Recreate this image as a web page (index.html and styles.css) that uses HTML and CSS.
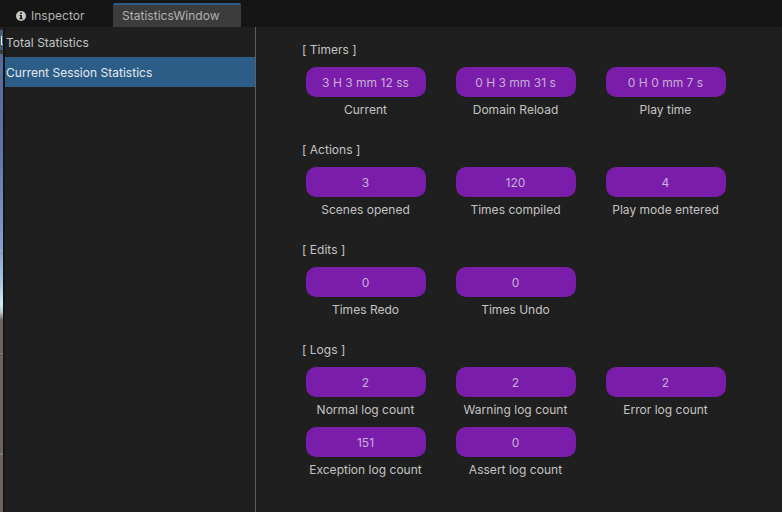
FILE: index.html
```html
<!DOCTYPE html>
<html lang="en">
<head>
<meta charset="utf-8">
<title>StatisticsWindow</title>
<link rel="stylesheet" href="styles.css">
</head>
<body>
<header class="tabs">
  <div class="tab">
    <svg class="info" viewBox="0 0 10 10"><circle cx="5" cy="5" r="5" fill="#c8c8c8"/><path d="M4.1 1.5h1.8v1.6H4.1zM3.5 4h2.4v3.2h.8v1.1H3.4V7.2h.8V5.1h-.7z" fill="#151515"/></svg>
    <span>Inspector</span>
  </div>
  <div class="tab active"><span>StatisticsWindow</span></div>
</header>
<div class="body">
  <div class="scene"><div class="scene-bar"><i></i></div><div class="sky"></div><div class="ground"></div></div>
  <nav class="sidebar">
    <div class="item">Total Statistics</div>
    <div class="item selected">Current Session Statistics</div>
  </nav>
  <main class="content">
    <section>
      <h2>[ Timers ]</h2>
      <div class="grid">
        <div class="stat"><b>3 H 3 mm 12 ss</b><span>Current</span></div>
        <div class="stat"><b>0 H 3 mm 31 s</b><span>Domain Reload</span></div>
        <div class="stat"><b>0 H 0 mm 7 s</b><span>Play time</span></div>
      </div>
    </section>
    <section>
      <h2>[ Actions ]</h2>
      <div class="grid">
        <div class="stat"><b>3</b><span>Scenes opened</span></div>
        <div class="stat"><b>120</b><span>Times compiled</span></div>
        <div class="stat"><b>4</b><span>Play mode entered</span></div>
      </div>
    </section>
    <section>
      <h2>[ Edits ]</h2>
      <div class="grid">
        <div class="stat"><b>0</b><span>Times Redo</span></div>
        <div class="stat"><b>0</b><span>Times Undo</span></div>
      </div>
    </section>
    <section>
      <h2>[ Logs ]</h2>
      <div class="grid">
        <div class="stat"><b>2</b><span>Normal log count</span></div>
        <div class="stat"><b>2</b><span>Warning log count</span></div>
        <div class="stat"><b>2</b><span>Error log count</span></div>
        <div class="stat"><b>151</b><span>Exception log count</span></div>
        <div class="stat"><b>0</b><span>Assert log count</span></div>
      </div>
    </section>
  </main>
</div>
</body>
</html>
```
FILE: styles.css
```css
* { box-sizing: border-box; }
body {
  margin: 0;
  width: 782px;
  height: 512px;
  overflow: hidden;
  display: flex;
  flex-direction: column;
  background: #151515;
  color: #c4c4c4;
  font: 12px/16px Inter, "Liberation Sans", sans-serif;
  letter-spacing: 0.02px;
}
.tabs { display: flex; height: 27px; padding: 3px 0 0 5px; }
.tab { display: flex; align-items: center; width: 108px; height: 24px; padding: 2px 0 0 11px; gap: 5px; color: #b2b2b2; }
.tab.active { width: 128px; padding: 0 0 0 9px; background: #3c3c3c; border-top: 2px solid #2c5d87; border-radius: 2px 2px 0 0; }
.info { width: 10px; height: 10px; }
.body { display: flex; flex: 1; min-height: 0; }
.scene { display: flex; flex-direction: column; width: 3px; margin-right: 2px; }
.scene-bar { height: 27px; padding: 6px 0 0 1px; border-top: 3px solid #282828; border-bottom: 4px solid #3c3c3c; background: #46607c; }
.scene-bar i { display: block; width: 2px; height: 9px; border-left: 1px solid #eee; border-bottom: 1px solid #ccc; }
.sky { height: 266px; background: linear-gradient(transparent 199px, #8298b5 199px 200px, transparent 200px), linear-gradient(#566b99, #5c73a3 35%, #809fcb 72%, #a6c9e1 86%, #cdf0f3 94%, #b9cccb 97%, #6c6966); }
.ground { flex: 1; background: linear-gradient(transparent 33px, #827d77 33px 34px, transparent 34px 133px, #827d77 133px 135px, transparent 135px), #6a625b; }
.sidebar { width: 251px; background: #1f1f1f; border-right: 1px solid #606060; }
.item { height: 30px; padding: 8px 1px 0; }
.item.selected { background: #2c5d87; color: #e6ebef; }
.content { display: flex; flex-direction: column; gap: 24px; flex: 1; padding: 15px 0 0 46px; background: #1f1f1f; }
h2 { margin: 0 0 9px; height: 16px; font: inherit; }
section { display: flow-root; height: 76px; }
.grid { display: grid; grid-template-columns: repeat(3, 120px); gap: 10px 30px; margin-left: 4px; }
.stat { height: 50px; text-align: center; }
.stat b { display: block; height: 30px; padding: 1px 1px 0 0; line-height: 30px; border-radius: 10px; background: #7a1dab; color: #c9b0d6; font-weight: 400; }
.stat span { display: block; margin-top: 5px; padding-right: 1px; white-space: nowrap; }
```
